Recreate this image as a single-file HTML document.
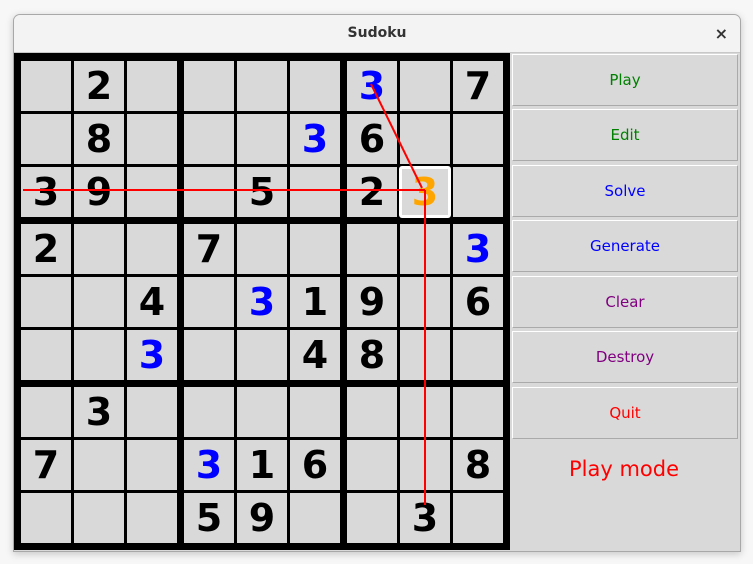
<!DOCTYPE html>
<html><head><style>
body{margin:0;width:753px;height:564px;background:#f7f7f7;position:relative;overflow:hidden;font-family:"DejaVu Sans","Liberation Sans",sans-serif}
.win{position:absolute;left:13px;top:14px;width:726px;height:536px;background:#d9d9d9;border:1px solid #a8a8a8;border-radius:7px 7px 0 0;box-shadow:0 2px 8px rgba(0,0,0,.2);overflow:hidden}
.title{position:absolute;left:0;top:0;width:726px;height:37px;background:#f3f3f3;border-bottom:1px solid #c8c8c8;text-align:center;line-height:37px;font-size:14px;font-weight:bold;color:#333}
.x{position:absolute;right:12px;top:0;font-size:16px;font-weight:bold}
.board{position:absolute;left:0px;top:38px;background:#000;padding:8px 7px 7px 7px;display:grid;grid-template-columns:156px 156px 156px;grid-template-rows:156px 156px 156px;gap:7px}
.b{display:grid;grid-template-columns:50px 50px 50px;grid-template-rows:50px 50px 50px;gap:3px}
.b div{background:#d9d9d9;font-weight:bold;font-size:38px;text-align:center;line-height:50px;color:#000}
.b div.u{color:#0000ff}
.b div.s{color:#ffa500;outline:3px solid #fff;outline-offset:-2px;border-radius:2px}
.btn{position:absolute;left:498px;width:224px;height:50px;border:1px solid #aaa;border-top-color:#fff;border-left-color:#fff;background:#d9d9d9;text-align:center;line-height:50px;font-size:15px}
.mode{position:absolute;left:498px;top:442px;width:224px;text-align:center;font-size:21px;color:#f00}
svg{position:absolute;left:0;top:0}
</style></head><body>
<div class="win">
<div class="title">Sudoku<span class="x">×</span></div>
<div class="board">
<div class="b"><div></div><div>2</div><div></div><div></div><div>8</div><div></div><div>3</div><div>9</div><div></div></div>
<div class="b"><div></div><div></div><div></div><div></div><div></div><div class="u">3</div><div></div><div>5</div><div></div></div>
<div class="b"><div class="u">3</div><div></div><div>7</div><div>6</div><div></div><div></div><div>2</div><div class="s">3</div><div></div></div>
<div class="b"><div>2</div><div></div><div></div><div></div><div></div><div>4</div><div></div><div></div><div class="u">3</div></div>
<div class="b"><div>7</div><div></div><div></div><div></div><div class="u">3</div><div>1</div><div></div><div></div><div>4</div></div>
<div class="b"><div></div><div></div><div class="u">3</div><div>9</div><div></div><div>6</div><div>8</div><div></div><div></div></div>
<div class="b"><div></div><div>3</div><div></div><div>7</div><div></div><div></div><div></div><div></div><div></div></div>
<div class="b"><div></div><div></div><div></div><div class="u">3</div><div>1</div><div>6</div><div>5</div><div>9</div><div></div></div>
<div class="b"><div></div><div></div><div></div><div></div><div></div><div>8</div><div></div><div>3</div><div></div></div>
</div>
<div class="btn" style="top:39px;color:#008000">Play</div>
<div class="btn" style="top:94px;color:#008000">Edit</div>
<div class="btn" style="top:150px;color:#0000ff">Solve</div>
<div class="btn" style="top:205px;color:#0000ff">Generate</div>
<div class="btn" style="top:261px;color:#800080">Clear</div>
<div class="btn" style="top:316px;color:#800080">Destroy</div>
<div class="btn" style="top:372px;color:#ff0000">Quit</div>
<div class="mode">Play mode</div>
</div>
<svg width="753" height="564"><g stroke="#f00" stroke-width="2" fill="none">
<line x1="371" y1="84" x2="422" y2="188"/>
<line x1="23" y1="190" x2="425" y2="190"/>
<line x1="425" y1="190" x2="425" y2="505"/>
</g></svg>
</body></html>
